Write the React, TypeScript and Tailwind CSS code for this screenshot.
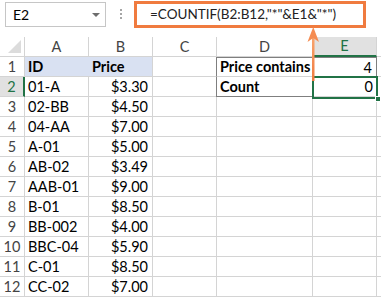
import React from "react";

const rows: [string, string][] = [
  ["01-A", "$3.30"],
  ["02-BB", "$4.50"],
  ["04-AA", "$7.00"],
  ["A-01", "$5.00"],
  ["AB-02", "$3.49"],
  ["AAB-01", "$9.00"],
  ["B-01", "$8.50"],
  ["BB-002", "$4.00"],
  ["BBC-04", "$5.90"],
  ["C-01", "$8.50"],
  ["CC-02", "$7.00"],
];

const cols = ["A", "B", "C", "D", "E"];
const font = { fontFamily: "Lato, 'Liberation Sans', sans-serif" };

export default function App() {
  return (
    <div className="relative w-[381px] h-[298px] overflow-hidden bg-white text-black" style={font}>
      {/* Formula bar */}
      <div className="flex h-[37px] items-start pt-[2px] pl-[5px]">
        <div className="flex h-[25px] w-[101px] items-center justify-between border border-[#c6c6c6] pl-[7px] pr-[5px] text-[14px]">
          <span>E2</span>
          <span className="h-0 w-0 border-x-[4px] border-t-[4px] border-x-transparent border-t-[#6d6d6d]" />
        </div>
        <div className="ml-[14px] mt-[7px] flex flex-col gap-[2px]">
          <span className="h-[2px] w-[2px] bg-[#a6a6a6]" />
          <span className="h-[2px] w-[2px] bg-[#a6a6a6]" />
          <span className="h-[2px] w-[2px] bg-[#a6a6a6]" />
        </div>
        <div className="-mt-[1px] ml-[12px] flex h-[27px] w-[232px] items-center border-[3px] border-[#f07b3f] pl-[13px] text-[13.5px] text-[#222]">
          =COUNTIF(B2:B12,"*"&amp;E1&amp;"*")
        </div>
      </div>

      {/* Grid */}
      <div className="grid grid-cols-[25px_64px_64px_64px_96px_64px_4px] grid-rows-[20px] auto-rows-[20px] text-[14.5px]">
        {/* Column headers */}
        <div className="relative border-r border-b border-[#d4d4d4] bg-white">
          <svg className="absolute right-[3px] bottom-[3px]" width="13" height="13" viewBox="0 0 13 13">
            <polygon points="13,0 13,13 0,13" fill="#dcdcdc" />
          </svg>
        </div>
        {cols.map((c) =>
          c === "E" ? (
            <div key={c} className="flex items-center justify-center border-r border-b-2 border-r-[#d4d4d4] border-b-[#217346] bg-[#e1e1e1] text-[#217346]">
              {c}
            </div>
          ) : (
            <div key={c} className="flex items-center justify-center border-r border-b border-[#d4d4d4] bg-white text-[#444]">
              {c}
            </div>
          )
        )}
        <div className="border-b border-[#d4d4d4]" />

        {/* Row 1 */}
        <div className="flex items-center justify-center border-r border-b border-[#d4d4d4] text-[#444]">1</div>
        <div className="flex items-center border-b border-[#d4d4d4] bg-[#d9e1f2] pl-[3px] font-bold">ID</div>
        <div className="flex items-center border-r border-b border-[#d4d4d4] bg-[#d9e1f2] pl-[3px] font-bold">Price</div>
        <div className="border-r border-b border-[#d4d4d4]" />
        <div className="-ml-px flex items-center border-l border-t border-r border-b border-l-[#7f7f7f] border-t-[#7f7f7f] border-r-[#7f7f7f] border-b-[#d4d4d4] pl-[3px] font-bold">
          Price contains
        </div>
        <div className="flex items-center justify-end border-t border-r border-t-[#7f7f7f] border-r-[#7f7f7f] pr-[4px]">4</div>
        <div className="border-b border-[#d4d4d4]" />

        {/* Rows 2..12 */}
        {rows.map(([id, price], i) => (
          <React.Fragment key={id}>
            {i === 0 ? (
              <div className="flex items-center justify-center border-r-2 border-b border-r-[#217346] border-b-[#d4d4d4] bg-[#e1e1e1] text-[#217346]">2</div>
            ) : (
              <div className="flex items-center justify-center border-r border-b border-[#d4d4d4] text-[#444]">{i + 2}</div>
            )}
            <div className="flex items-center border-r border-b border-[#d4d4d4] pl-[3px]">{id}</div>
            <div className="flex items-center justify-end border-r border-b border-[#d4d4d4] pr-[4px]">{price}</div>
            <div className="border-r border-b border-[#d4d4d4]" />
            {i === 0 ? (
              <>
                <div className="-ml-px flex items-center border-l border-b border-[#7f7f7f] pl-[3px] font-bold">Count</div>
                <div className="flex items-center justify-end border-b border-[#d4d4d4] pr-[4px]">0</div>
              </>
            ) : (
              <>
                <div className="border-r border-b border-[#d4d4d4]" />
                <div className="border-r border-b border-[#d4d4d4]" />
              </>
            )}
            <div className="border-b border-[#d4d4d4]" />
          </React.Fragment>
        ))}
      </div>

      {/* Selection box on E2 */}
      <div className="absolute left-[312px] top-[76px] h-[23px] w-[66px] border-2 border-[#217346]" />
      <div className="absolute left-[375px] top-[96px] h-[6px] w-[6px] border border-white bg-[#217346]" />

      {/* Arrow */}
      <svg className="absolute left-[305px] top-[27px]" width="16" height="54" viewBox="0 0 16 54">
        <defs>
          <linearGradient id="ag" x1="0" y1="0" x2="0" y2="1">
            <stop offset="0" stopColor="#f8a46e" />
            <stop offset="1" stopColor="#f07b3f" />
          </linearGradient>
        </defs>
        <rect x="7" y="10" width="2.5" height="44" fill="url(#ag)" />
        <polygon points="8.25,0 14,15 8.25,11 2.5,15" fill="#f58c52" />
      </svg>
    </div>
  );
}
